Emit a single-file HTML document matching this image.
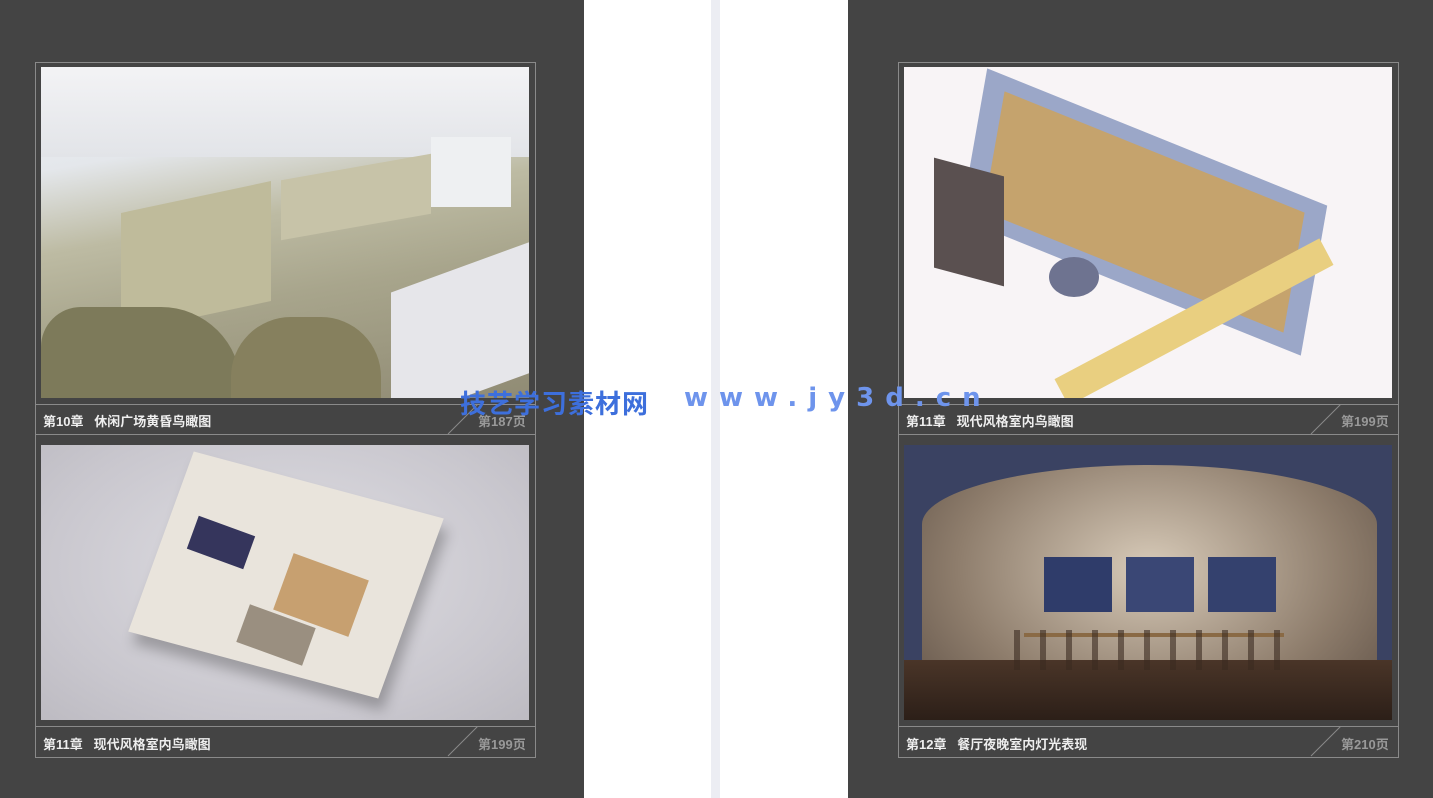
<!DOCTYPE html>
<html><head><meta charset="utf-8"><style>
*{margin:0;padding:0;box-sizing:border-box}
body{width:1433px;height:798px;background:#fff;position:relative;overflow:hidden;font-family:"Liberation Sans","Noto Sans CJK SC",sans-serif}
.a{position:absolute}
.panel{background:#444;top:0;height:798px}
.frame{border:1px solid #8a8a8a}
.hl{height:1px;background:#8a8a8a}
.cap{color:#eee;font-weight:bold;font-size:13px}
.pg{color:#999;font-weight:bold;font-size:13px}
.img{overflow:hidden}
</style></head><body>
<div class="a panel" style="left:0;width:584px"></div>
<div class="a panel" style="left:848px;width:585px"></div>
<div class="a" style="left:711px;top:0;width:9px;height:798px;background:#ecedf3"></div>

<div class="a frame" style="left:35px;top:62px;width:501px;height:696px"></div>
<div class="a hl" style="left:35px;top:404px;width:501px"></div>
<div class="a hl" style="left:35px;top:434px;width:501px"></div>
<div class="a hl" style="left:35px;top:726px;width:501px"></div>
<div class="a img" style="left:41px;top:67px;width:488px;height:331px;background:linear-gradient(170deg,#eef0f3 0%,#e4e7eb 25%,#bdbba3 45%,#a8a58c 65%,#908b74 100%)">
 <div class="a" style="left:0;top:0;width:488px;height:90px;background:linear-gradient(#f3f3f5,#e2e4e8)"></div>
 <div class="a" style="left:80px;top:130px;width:150px;height:120px;background:#bfbb9b;transform:skewY(-12deg)"></div>
 <div class="a" style="left:240px;top:100px;width:150px;height:60px;background:#c7c3a8;transform:skewY(-10deg)"></div>
 <div class="a" style="left:390px;top:70px;width:80px;height:70px;background:#eef0f2"></div>
 <div class="a" style="left:350px;top:200px;width:140px;height:131px;background:#e6e6ea;transform:skewY(-20deg)"></div>
 <div class="a" style="left:0;top:240px;width:200px;height:91px;background:#7d7a5a;border-radius:40px 80px 0 0"></div>
 <div class="a" style="left:190px;top:250px;width:150px;height:81px;background:#86805e;border-radius:60px 60px 0 0"></div>
</div>
<div class="a cap" style="left:43px;top:411px">第10章&nbsp;&nbsp;&nbsp;休闲广场黄昏鸟瞰图</div>
<div class="a pg" style="left:478px;top:411px">第187页</div>
<svg class="a" style="left:445px;top:404px" width="40" height="31"><line x1="33" y1="0" x2="3" y2="30" stroke="#8a8a8a"/></svg>

<div class="a img" style="left:41px;top:445px;width:488px;height:275px;background:radial-gradient(ellipse at 50% 45%,#e0dfe4,#c9c7ce 70%,#bdbbc2)">
 <div class="a" style="left:120px;top:40px;width:250px;height:180px;background:#e9e4dc;transform:skew(-20deg,15deg);box-shadow:8px 10px 12px rgba(0,0,0,.25)"></div>
 <div class="a" style="left:150px;top:80px;width:60px;height:35px;background:#35355c;transform:rotate(20deg)"></div>
 <div class="a" style="left:240px;top:120px;width:80px;height:60px;background:#c7a070;transform:rotate(20deg)"></div>
 <div class="a" style="left:200px;top:170px;width:70px;height:40px;background:#9a8f80;transform:rotate(20deg)"></div>
</div>
<div class="a cap" style="left:43px;top:734px">第11章&nbsp;&nbsp;&nbsp;现代风格室内鸟瞰图</div>
<div class="a pg" style="left:478px;top:734px">第199页</div>
<svg class="a" style="left:445px;top:726px" width="40" height="31"><line x1="33" y1="0" x2="3" y2="30" stroke="#8a8a8a"/></svg>

<div class="a frame" style="left:898px;top:62px;width:501px;height:696px"></div>
<div class="a hl" style="left:898px;top:404px;width:501px"></div>
<div class="a hl" style="left:898px;top:434px;width:501px"></div>
<div class="a hl" style="left:898px;top:726px;width:501px"></div>
<div class="a img" style="left:904px;top:67px;width:488px;height:331px;background:#f8f4f6">
 <div class="a" style="left:70px;top:70px;width:340px;height:150px;background:#9ba7c8;transform:skew(-10deg,22deg)"></div>
 <div class="a" style="left:90px;top:85px;width:300px;height:120px;background:#c5a36d;transform:skew(-10deg,22deg)"></div>
 <div class="a" style="left:140px;top:240px;width:300px;height:30px;background:#e9cf80;transform:rotate(-28deg)"></div>
 <div class="a" style="left:30px;top:100px;width:70px;height:110px;background:#5a5050;transform:skewY(15deg)"></div>
 <div class="a" style="left:145px;top:190px;width:50px;height:40px;border-radius:50%;background:#6e7390"></div>
</div>
<div class="a cap" style="left:906px;top:411px">第11章&nbsp;&nbsp;&nbsp;现代风格室内鸟瞰图</div>
<div class="a pg" style="left:1341px;top:411px">第199页</div>
<svg class="a" style="left:1308px;top:404px" width="40" height="31"><line x1="33" y1="0" x2="3" y2="30" stroke="#8a8a8a"/></svg>

<div class="a img" style="left:904px;top:445px;width:488px;height:275px;background:#3a4262">
 <div class="a" style="left:18px;top:20px;width:455px;height:260px;border-radius:230px 230px 0 0/60px 60px 0 0;background:radial-gradient(ellipse at 50% 40%,#d8cbb9,#8e7d6c 60%,#5a4c42)"></div>
 <div class="a" style="left:0;top:215px;width:488px;height:60px;background:linear-gradient(#4a3528,#2c1f18)"></div>
 <div class="a" style="left:140px;top:112px;width:68px;height:55px;background:#2f3c6a"></div>
 <div class="a" style="left:222px;top:112px;width:68px;height:55px;background:#3a4775"></div>
 <div class="a" style="left:304px;top:112px;width:68px;height:55px;background:#34416e"></div>
 <div class="a" style="left:120px;top:188px;width:260px;height:4px;background:#8a6a45"></div>
 <div class="a" style="left:90px;top:185px;width:300px;height:40px;background:repeating-linear-gradient(90deg,transparent 0 20px,#3a2a20 20px 26px);opacity:.6"></div>
</div>
<div class="a cap" style="left:906px;top:734px">第12章&nbsp;&nbsp;&nbsp;餐厅夜晚室内灯光表现</div>
<div class="a pg" style="left:1341px;top:734px">第210页</div>
<svg class="a" style="left:1308px;top:726px" width="40" height="31"><line x1="33" y1="0" x2="3" y2="30" stroke="#8a8a8a"/></svg>

<div class="a" style="left:460px;top:384px;font-size:26px;font-weight:bold;color:#3d6fdc;letter-spacing:1px;white-space:nowrap">技艺学习素材网</div>
<div class="a" style="left:684px;top:383px;font-size:26px;font-weight:bold;color:#6e94ec;letter-spacing:11px;white-space:nowrap;font-family:'DejaVu Sans',sans-serif">www.jy3d.cn</div>
</body></html>
